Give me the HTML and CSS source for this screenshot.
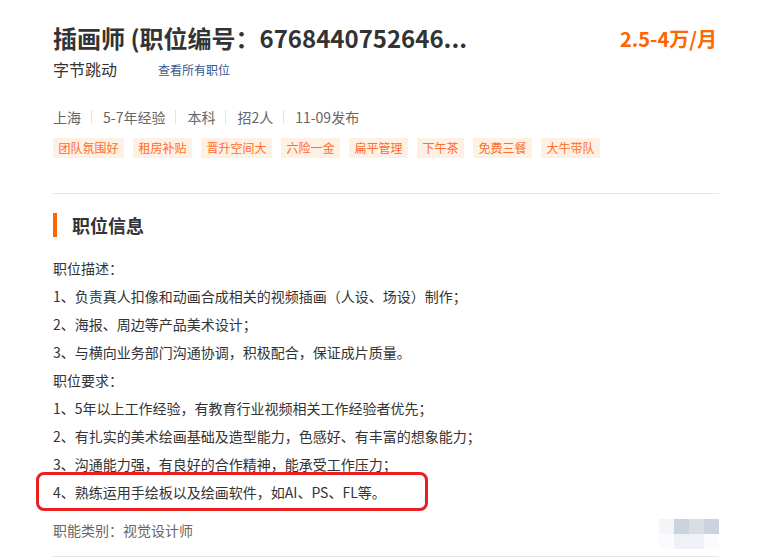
FILE: index.html
```html
<!DOCTYPE html>
<html lang="zh-CN">
<head>
    <meta charset="UTF-8">
    <meta name="viewport" content="width=device-width, initial-scale=1.0">
    <title>插画师 - 字节跳动</title>
    <link rel="stylesheet" href="styles.css">
</head>
<body>
    <div class="job-page">
        <div class="job-head">
            <div class="job-head-top">
                <h1 class="job-title">插画师 (职位编号：6768440752646...</h1>
                <span class="job-salary">2.5-4万/月</span>
            </div>
            <div class="job-company">
                <span class="company-name">字节跳动</span>
                <a class="company-jobs" href="#">查看所有职位</a>
            </div>
            <ul class="job-meta">
                <li>上海</li>
                <li>5-7年经验</li>
                <li>本科</li>
                <li>招2人</li>
                <li>11-09发布</li>
            </ul>
            <ul class="job-tags">
                <li>团队氛围好</li>
                <li>租房补贴</li>
                <li>晋升空间大</li>
                <li>六险一金</li>
                <li>扁平管理</li>
                <li>下午茶</li>
                <li>免费三餐</li>
                <li>大牛带队</li>
            </ul>
        </div>

        <section class="job-info">
            <h2 class="section-title">职位信息</h2>
            <div class="job-desc">
                <p>职位描述：</p>
                <p>1、负责真人扣像和动画合成相关的视频插画（人设、场设）制作；</p>
                <p>2、海报、周边等产品美术设计；</p>
                <p>3、与横向业务部门沟通协调，积极配合，保证成片质量。</p>
                <p>职位要求：</p>
                <p>1、5年以上工作经验，有教育行业视频相关工作经验者优先；</p>
                <p>2、有扎实的美术绘画基础及造型能力，色感好、有丰富的想象能力；</p>
                <p>3、沟通能力强，有良好的合作精神，能承受工作压力；</p>
                <p class="marked">4、熟练运用手绘板以及绘画软件，如AI、PS、FL等。</p>
            </div>
            <div class="job-category">
                <span>职能类别：视觉设计师</span>
                <!-- 打码区域 -->
                <div class="mosaic">
                    <i class="m1"></i><i class="m2"></i><i class="m3"></i><i class="m2"></i>
                    <i class="m4"></i><i class="m5"></i><i class="m5"></i><i class="m4"></i>
                </div>
            </div>
        </section>
    </div>
</body>
</html>
```

FILE: styles.css
```css
body {
    margin: 0;
    padding: 0;
    background-color: #fff;
    font-family: "Noto Sans CJK SC", "Microsoft YaHei", sans-serif;
    color: #333;
}
ul {
    margin: 0;
    padding: 0;
    list-style: none;
}
p {
    margin: 0;
}
.job-page {
    width: 666px;
    padding: 22px 0 0 53px;
}
.job-head {
    padding-bottom: 35px;
    border-bottom: 1px solid #e6e6e6;
}
.job-head-top {
    display: flex;
    justify-content: space-between;
    align-items: center;
    padding-right: 2px;
}
.job-title {
    margin: 0;
    font-size: 24px;
    line-height: 32px;
    font-weight: bold;
    color: #333;
}
.job-salary {
    font-size: 20px;
    font-weight: bold;
    color: #ff6600;
}
.job-company {
    display: flex;
    align-items: center;
    margin-top: 3px;
    height: 24px;
}
.company-name {
    font-size: 16px;
    color: #333;
}
.company-jobs {
    margin-left: 41px;
    font-size: 12px;
    color: #35578f;
    text-decoration: none;
}
.job-meta {
    display: flex;
    align-items: center;
    margin-top: 29px;
    font-size: 14px;
    line-height: 14px;
    color: #666;
}
.job-meta li + li {
    margin-left: 10px;
    padding-left: 11px;
    border-left: 1px solid #e3e3e3;
}
.job-tags {
    display: flex;
    gap: 9px;
    margin-top: 14px;
}
.job-tags li {
    padding: 0 5.5px;
    height: 20px;
    line-height: 20px;
    font-size: 12px;
    color: #ff6c2c;
    background-color: #fff0e4;
}
.section-title {
    margin: 19px 0 17px;
    padding-left: 15px;
    height: 24px;
    line-height: 24px;
    font-size: 18px;
    font-weight: bold;
    border-left: 4px solid #ff6600;
}
.job-desc {
    font-size: 14px;
    line-height: 28px;
    color: #333;
}
.marked {
    position: relative;
}
.marked::after {
    content: "";
    position: absolute;
    left: -17px;
    top: -6px;
    width: 386px;
    height: 33px;
    border: 3px solid #ea2020;
    border-radius: 8px;
}
.job-category {
    display: flex;
    align-items: flex-start;
    justify-content: space-between;
    margin-top: 10px;
    padding-bottom: 7px;
    border-bottom: 1px solid #e6e6e6;
    font-size: 14px;
    line-height: 28px;
    color: #666;
}
.mosaic {
    display: grid;
    grid-template-columns: repeat(4, 15px);
    grid-auto-rows: 15px;
    margin-top: 3px;
}
.mosaic .m1 { background-color: #f3f5f8; }
.mosaic .m2 { background-color: #cbd3de; }
.mosaic .m3 { background-color: #d8dee6; }
.mosaic .m4 { background-color: #fafbfc; }
.mosaic .m5 { background-color: #eef1f5; }
```
